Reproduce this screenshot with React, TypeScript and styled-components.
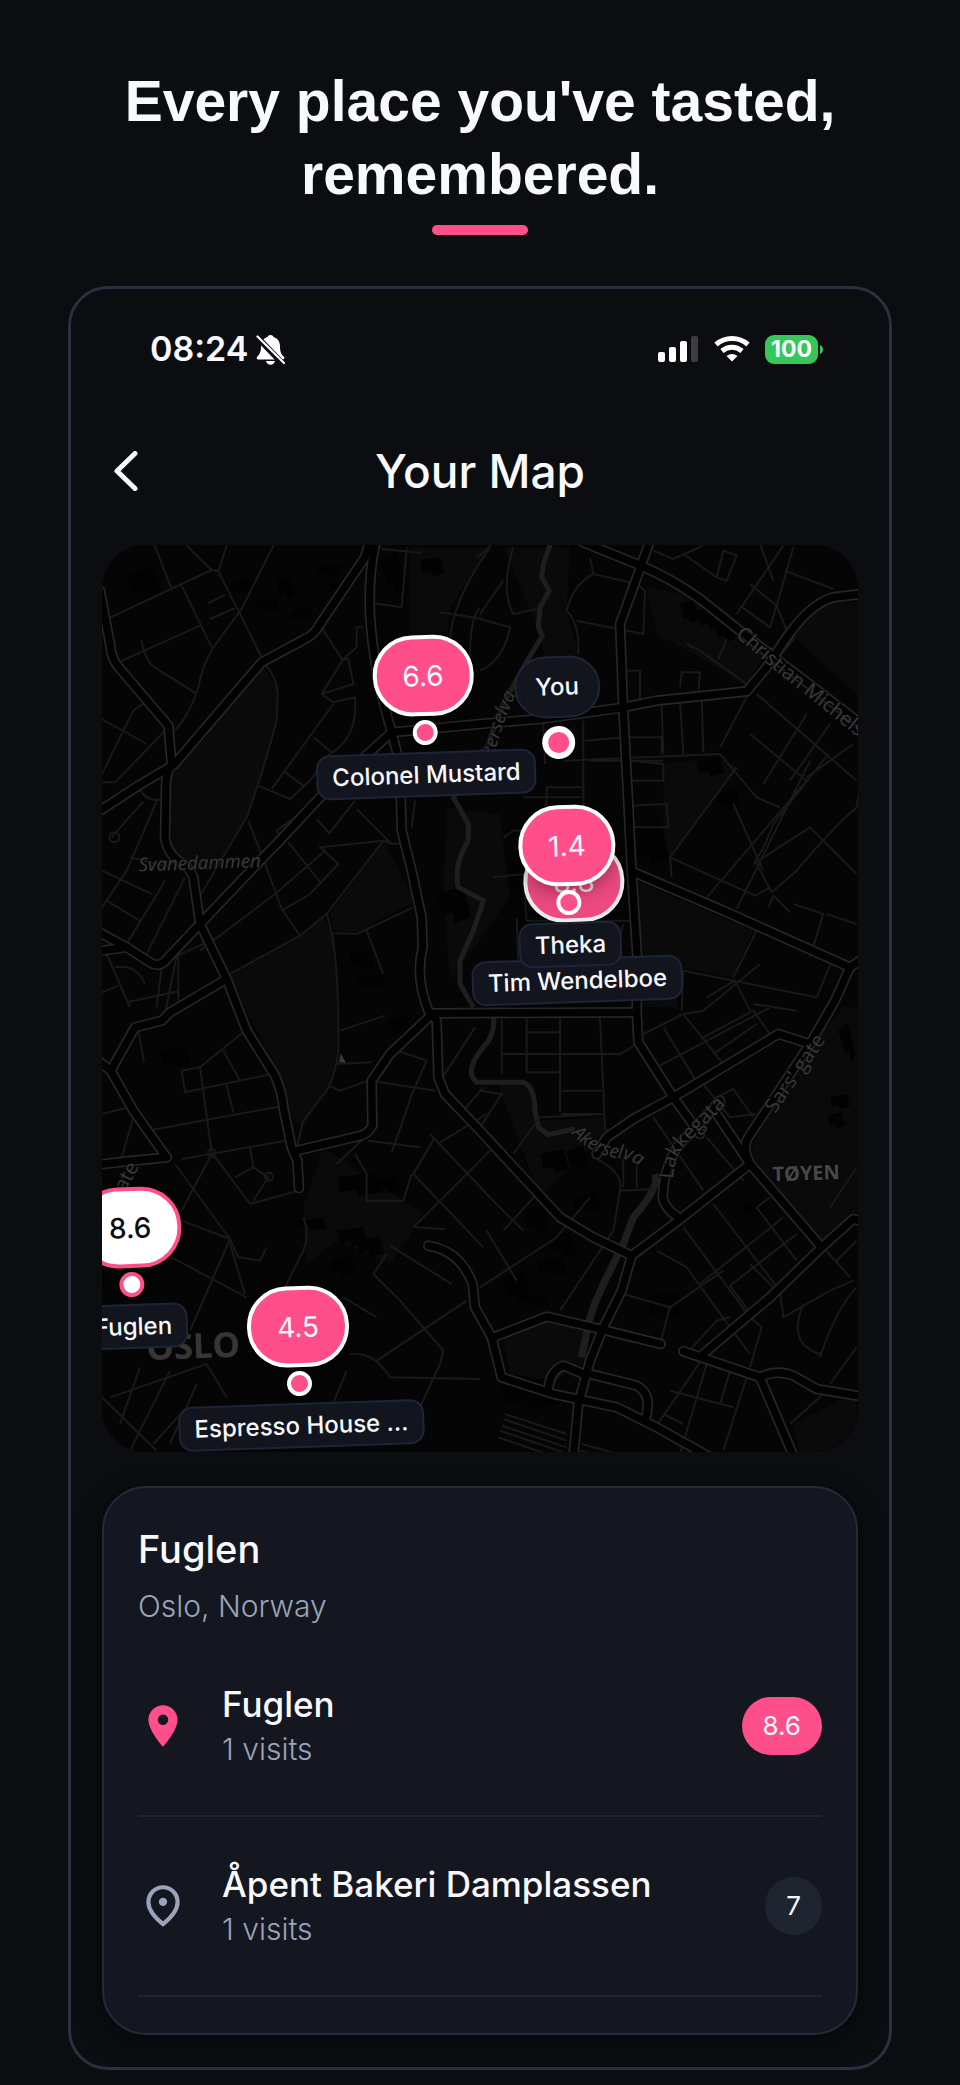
import React from "react";
import styled, { createGlobalStyle, css } from "styled-components";

const color = {
  page: "#0b0d11",
  frame: "#273140",
  card: "#14171f",
  cardLine: "#232b37",
  pink: "#ff4f8b",
  text: "#f8f9ff",
  muted: "#9aa3ba",
};

const GlobalStyle = createGlobalStyle`
  *, *::before, *::after { box-sizing: border-box; }
  body {
    margin: 0;
    background: ${color.page};
    color: ${color.text};
    font-family: Inter, "Liberation Sans", sans-serif;
  }
  h1, h2, h3, p, ul { margin: 0; padding: 0; }
  ul { list-style: none; }
`;

const Page = styled.main`
  display: flex;
  flex-direction: column;
  align-items: center;
  padding: 65px 68px 15px;
`;

const Headline = styled.h1`
  max-width: 760px;
  font: bold 57px/73px "Liberation Sans", Arial, sans-serif;
  text-align: center;
`;

const Accent = styled.div`
  width: 96px;
  height: 10px;
  margin: 14px 0 51px;
  border-radius: 5px;
  background: ${color.pink};
`;

const Phone = styled.section`
  width: 100%;
  padding: 0 31px 32px;
  border: 3px solid ${color.frame};
  border-radius: 40px;
`;

const StatusBar = styled.div`
  display: flex;
  align-items: center;
  justify-content: space-between;
  height: 120px;
  padding: 0 35px 0 48px;
`;

const Clock = styled.div`
  display: flex;
  align-items: center;
  gap: 8px;
  font-size: 34px;
  font-weight: 600;
  line-height: 44px;
`;

const Indicators = styled.div`
  display: flex;
  align-items: center;
  gap: 15px;
`;

const Battery = styled.div`
  display: flex;
  align-items: center;
  gap: 2px;
`;

const BatteryBody = styled.span`
  width: 53px;
  height: 29px;
  border-radius: 9px;
  background: #34c759;
  color: #fff;
  font-size: 23px;
  font-weight: 700;
  line-height: 29px;
  text-align: center;
`;

const TitleBar = styled.header`
  display: grid;
  grid-template-columns: 48px 1fr 48px;
  align-items: center;
  height: 136px;
  padding-bottom: 13px;
`;

const BackButton = styled.button`
  display: flex;
  align-items: center;
  justify-content: center;
  height: 48px;
  padding: 0;
  border: 0;
  background: none;
  color: ${color.text};
`;

const Title = styled.h2`
  font-size: 46px;
  font-weight: 500;
  line-height: 64px;
  text-align: center;
`;

const MapArea = styled.div`
  position: relative;
  width: 100%;
  aspect-ratio: 756 / 907;
  overflow: hidden;
  border-radius: 44px;
  background: #040404;
`;

const MapDrawing = styled.svg`
  display: block;
  width: 100%;
  height: 100%;
`;

const Pin = styled.button<{ $x: number; $y: number; $you?: boolean }>`
  position: absolute;
  left: ${(p) => (p.$x / 756) * 100}%;
  top: ${(p) => (p.$y / 907) * 100}%;
  display: flex;
  flex-direction: column;
  align-items: center;
  padding: 0;
  border: 0;
  background: none;
  color: ${color.text};
  font: 500 24px/28px Inter, "Liberation Sans", sans-serif;
  white-space: nowrap;
  transform-origin: 50% ${(p) => (p.$you ? 87 : 98)}px;
  transform: translate(-50%, ${(p) => (p.$you ? -87 : -98)}px) rotate(-2deg);
`;

const Score = styled.span<{ $selected?: boolean; $behind?: boolean }>`
  display: flex;
  align-items: center;
  justify-content: center;
  min-width: 94px;
  height: 81px;
  margin-bottom: 4px;
  padding: 0 26px;
  border: 4px solid #fff;
  border-radius: 40px;
  background: ${color.pink};
  box-shadow: 0 6px 16px rgba(0, 0, 0, 0.3);
  font-size: 28px;
  font-weight: 400;
  ${(p) => p.$selected && css`
    border-color: ${color.pink};
    background: #fff;
    color: #0b0d11;
    font-weight: 500;
  `}
  ${(p) => p.$behind && css`opacity: 0.92;`}
`;

const Dot = styled.span<{ $selected?: boolean; $large?: boolean }>`
  width: ${(p) => (p.$large ? 33 : 25)}px;
  height: ${(p) => (p.$large ? 33 : 25)}px;
  border: ${(p) => (p.$large ? 6 : 4)}px solid ${(p) => (p.$selected ? color.pink : "#fff")};
  border-radius: 50%;
  background: ${(p) => (p.$selected ? "#fff" : color.pink)};
`;

const Label = styled.span`
  width: max-content;
  max-width: 250px;
  height: 45px;
  margin-top: 7px;
  padding: 0 14px;
  border: 2px solid #1c2538;
  border-radius: 14px;
  background: #12151e;
  line-height: 41px;
`;

const YouBubble = styled.span`
  display: flex;
  align-items: center;
  height: 62px;
  margin-bottom: 8px;
  padding: 0 19px;
  border: 2px solid #1c2538;
  border-radius: 31px;
  background: #12151e;
`;

const Card = styled.section`
  margin-top: 34px;
  padding: 36px 34px;
  border: 2px solid ${color.cardLine};
  border-radius: 44px;
  background: ${color.card};
  box-shadow: 0 8px 24px rgba(0, 0, 0, 0.5);
`;

const CardTitle = styled.h2`
  font-size: 38px;
  font-weight: 500;
  line-height: 50px;
`;

const CardPlace = styled.p`
  margin: 12px 0 11px;
  color: ${color.muted};
  font-size: 30px;
  font-weight: 300;
  line-height: 40px;
`;

const Row = styled.li`
  display: flex;
  align-items: center;
  height: 180px;
  border-bottom: 2px solid #1f2632;
`;

const RowText = styled.div`
  flex: 1;
  margin-left: 34px;
`;

const RowName = styled.h3`
  font-size: 35px;
  font-weight: 500;
  line-height: 46px;
`;

const RowVisits = styled.p`
  color: ${color.muted};
  font-size: 30px;
  font-weight: 300;
  line-height: 44px;
`;

const Badge = styled.span<{ $hot?: boolean }>`
  min-width: 56px;
  height: 58px;
  padding: 0 21px;
  border-radius: 29px;
  background: ${(p) => (p.$hot ? color.pink : "#1e2430")};
  font-size: 26px;
  font-weight: 400;
  line-height: 58px;
  text-align: center;
`;

/* Map geometry, in thirds of a pixel from the map's own origin. */
const MAIN = [
  "M845 0L835 45L825 80L690 280Q672 312 650 322L515 395L252 702L145 765L0 860",
  "M30 180L60 340Q64 380 82 405L235 585L245 700Q228 730 228 760L225 920Q230 960 258 985Q300 1010 310 1040L330 1180L410 1345L470 1500L555 1635Q578 1690 580 1730L605 1850L622 1890L627 1972",
  "M860 20Q835 120 840 250Q850 420 905 605L930 700L935 900L965 1020L995 1160L998 1250Q975 1340 1015 1440L1040 1470L1045 1640L1065 1690L1170 1800L1410 2060L1510 2120L1625 2175",
  "M905 605L1170 580L1350 565L1590 532L1700 510L1970 482L2030 410L2090 320Q2160 220 2230 200L2330 188",
  "M905 605L690 800L560 940L520 980L330 1180L235 1280Q210 1315 180 1295L110 1250L0 1190",
  "M110 1250L0 1265",
  "M410 1345L240 1445L215 1470L135 1490L62 1620L130 1740L230 1880",
  "M0 1570L62 1620M0 1905L110 1892L230 1880",
  "M1480 35L1640 100Q1740 140 1830 205L2000 340L2320 585",
  "M1680 30L1655 100L1590 280L1600 540L1615 820L1625 1020L1643 1300L1640 1440L1645 1535L1750 1700L1830 1810",
  "M1625 1022L1900 1140L2280 1310L2340 1270M2280 1310L2235 1410L2160 1540",
  "M1030 1448L1635 1445M1025 1452L900 1570L845 1650L847 1785Q835 1812 800 1818L620 1860",
  "M1015 2145Q1110 2160 1148 2260L1155 2330L1205 2420L1235 2540L1390 2590L1580 2630L1700 2690L1870 2785",
  "M1750 1700L2065 1510L2160 1540L1975 1820Q1955 1850 1980 1900L2195 2150L2290 2065L2340 2080",
  "M1750 1700L1630 1765L1550 1820L1520 1870",
  "M1890 1710L1760 1850Q1720 1920 1718 2000Q1725 2035 1765 2060",
  "M1880 1750L1940 1840L1980 1900L1765 2070L1625 2175L1595 2280L1540 2390L1500 2490L1465 2620L1450 2780",
  "M2195 2150L2040 2300L1840 2470",
  "M1210 2420L1370 2358L1530 2395L1712 2440",
  "M1500 2530L1640 2565Q1690 2590 1665 2670M1480 2530L1420 2505Q1380 2520 1375 2575",
  "M1780 2462L2010 2540Q2060 2515 2110 2535L2180 2575L2330 2600M2010 2540L2110 2775",
];

const SIDE = [
  "M190 35L243 170M36 272L243 175L365 118L385 122L445 240L525 400Q560 440 563 490L560 570Q520 720 470 860L330 1095M290 45L365 118M410 45L385 122M550 45L455 235L370 350Q335 410 325 470Q300 550 255 600M275 165L365 350M355 218L405 192M360 265L435 232",
  "M85 395L330 285M155 330Q165 400 210 420L318 488M36 565L170 640M165 515L130 540L36 730M235 590L75 755H36M150 775Q170 820 232 803M160 812L65 920M200 812L110 1020L36 1130M120 980L240 1010M36 1020L185 1090M50 1110L150 1170M225 1050L110 1240M285 1040L165 1280",
  "M695 290L757 388L775 385L790 460L695 490L730 515L795 500Q805 620 720 670L660 750L600 805L505 765M757 390L695 490M730 520L545 775M670 620L725 665M585 725L640 765M820 290H800V350L757 388M850 218L935 230L950 50M875 55L995 66M1200 50Q1080 220 1080 340M1170 230Q1140 260 1140 380M1050 245L1180 265",
  "M475 870L520 985L575 1135L630 1215M555 1090L330 1260M555 1090L705 960L690 950L880 930L905 940L940 938M595 935L695 1060M700 800L560 900L570 920M680 865L720 910M690 950L745 1000L660 1090L575 1140M800 835L905 940M795 810L720 905M880 930L710 1150L630 1215L420 1330M710 1150Q745 1250 745 1500V1560Q735 1640 710 1680L640 1770L620 1850M730 1208L800 1210L970 1130M830 1200L880 1330M975 810L965 890",
  "M50 1270L120 1430M36 1385L85 1365M75 1310Q140 1300 165 1360M215 1310L200 1430M265 1270V1410M110 1415L265 1382M345 1238L260 1275L225 1450",
  "M145 1500L162 1595M130 1760L95 1880M36 1750L105 1732M185 1798L565 1728M275 1885L600 1828M460 1505L330 1610L275 1620L285 1685L545 1630M400 1560L450 1650M330 1610L365 1865L480 2020L625 1980M410 1665L430 1745M365 1870L275 2040M480 1850L490 1910L435 1940M490 1910L535 1940L490 2010M255 1900L420 2125L445 2180L510 2190L530 2150M275 2070L420 2125L300 2400M420 2140L465 2290M245 2180L470 2300M640 2060Q660 2110 640 2160L580 2280",
  "M750 1500L885 1455M715 1665L750 1680L835 1650L900 1570M740 1600L845 1595M845 1650L1035 1680M920 1560L1010 1590L970 1680L905 1865M1155 1490L1055 1645M835 1830L990 1850M1035 1820L970 1930L1180 2150M1020 1810L1200 2000M1200 1860L970 2090M1180 1670L1120 1740M1190 1750L1050 1835M795 1870L830 1930V2010H940L965 1930M740 1900L825 1820M975 2090L1065 2095M900 2145L1085 2260M890 2170L850 2230L930 2310L1060 2460L1050 2500L980 2650M1130 2310L860 2490M780 2470Q850 2460 900 2540L1170 2545M700 2690L770 2520",
  "M60 2600L350 2500L410 2600M150 2510L90 2680M240 2520L110 2780M36 2600L200 2760M320 2560L240 2740M290 2630L190 2740M760 2300L860 2360",
  "M1160 80Q1220 40 1200 20M1270 50Q1230 180 1270 250L1340 235M1170 265L1260 290Q1240 390 1170 420M1240 150L1170 250M1500 80L1510 130Q1450 160 1430 240Q1470 280 1465 370M1510 130L1640 160L1665 180L1660 310L1460 270M1600 420H1650V505M1770 470L1775 425H1830L1825 480M1790 340L1830 360L1970 460M1910 325L1885 385",
  "M1500 690H1720M1420 690L1890 670L2000 800L2070 830M1360 580L1365 700M1480 570V840L1475 940M1485 630L1600 620M1620 620H1715V670M1620 690L1720 700V750H1620M1715 520L1720 670M1770 510L1780 670M1835 495L1840 665M1940 710L1740 980L1745 1040M1740 980L1995 1095L2040 1070M1890 650L1975 490L2115 320M2000 490L2300 750M1980 610L2150 750L1850 1100M2150 550L2020 760M2220 580L2100 750M2290 640L2150 740M2215 670L2050 880Q2020 960 1995 990L2045 1085L2120 1020Q2220 900 2300 830L2310 760M1990 1000L2160 890L2300 1030M1940 1135L2160 690M2020 1020L1930 820M1620 825L1730 820L1735 890H1615",
  "M2050 150L2010 40M2080 45L1940 250M2085 120L2230 175M1980 160L2060 225L2110 50M1950 225L2040 290L2060 225L2090 300M1880 140L1900 60L1940 75L1910 150Z M1690 60L1750 85L1840 45M1780 70L1880 140",
  "M1210 1040L1300 1030L1310 1170H1620M1280 1160L1285 1300M1240 920L1270 900L1480 895M1300 800H1480V770H1370V830M1600 1180L1560 1320M1780 1320L1775 1440M1780 1320L2180 1400L2230 1280M1850 1400L1935 1350L1980 1440M1930 1340L2000 1200L1980 1160M2035 1130L2050 1095L2100 1145M2110 1120L2200 1150L2160 1280M2210 1150L2300 1180",
  "M1235 1465V1630M1310 1460V1625H1410M1410 1460V1745M1310 1505H1410M1235 1570H1590L1640 1540M1530 1460L1545 1790L1555 1820M1415 1680H1535M1415 1750H1535L1350 1760L1270 1870M1170 1680L1235 1690L1170 1790M1510 1880Q1600 1920 1590 1980L1570 2100L1410 2340M1590 1980L1690 1975M1600 1880V1970M1640 1890V1970M1240 2100L1340 1990M1170 1970L1300 2100M1190 2100L1280 2250M1170 2270L1400 2120L1500 2000",
  "M1660 1510L1780 1450L1840 1440L2010 1300M1720 1490L1830 1670M1780 1450L1900 1600M1710 1605L2040 1430M1840 1520L1990 1440L2040 1510M1870 1570L2000 1480M1990 1420L2120 1440M1690 1760L1840 1980M1840 1660L1920 1760L2000 1750M1880 1700L1930 1675L1990 1760M1850 1820L1960 1950M1780 2090L1980 2360L2015 2390L1980 2510M1870 2020L2070 2280M1830 2260L2080 2060M1920 2265L2120 2110M2000 2030L2120 2190M2000 2030L2040 2000M1980 2200L2070 2290M1920 2265L1990 2360M1700 2160L1790 2210L1920 2390L1980 2470",
  "M1600 2290L1740 2330L1710 2440M1740 2330L1900 2220M1780 2480L1880 2370L1920 2360M2070 2280L2080 2360L2220 2280L2290 2250M2140 2320Q2090 2440 2190 2470M2300 2270Q2240 2330 2190 2480M2220 2560L2300 2450M2200 2150L2280 2240M2240 2190L2300 2130M1840 2480L1690 2700M1850 2500L1770 2770M1920 2520L1890 2620M1970 2540L1900 2760M1740 2580L1930 2630M1720 2650L1780 2680M2100 2680L2200 2590M2220 2030L2300 1910",
  "M1245 2650L1430 2710M1240 2665L1430 2730M1235 2685L1430 2750M1230 2700L1420 2765M1225 2720L1400 2780M1475 2740L1620 2780M1470 2760L1580 2790",
];

const PARKS = [
  "M520 405L563 480L560 580L470 860L380 1020H300L245 960L235 740L255 700Z",
  "M420 1335L630 1215L700 1160L735 1220L745 1500L730 1640L640 1790L600 1760L560 1620L470 1440Z",
  "M880 930L975 1110L800 1205L730 1200L720 1150Z",
  "M1240 50L1440 50L1430 240L1465 370L1370 420L1350 310Z",
  "M1670 170L1780 190L1980 330L2020 370L1970 470L1850 390L1700 310Z",
  "M1720 700L1890 680L1940 710L1740 980L1720 890Z",
  "M1640 1050L1990 1200L1930 1340L1770 1310L1760 1430L1650 1430Z",
  "M1220 1650L1330 1660L1350 1770L1540 1760L1550 1800L1350 2000Z",
  "M2160 1540L2260 1430H2320V2060L2195 2150L1980 1880L2010 1790Z",
  "M2090 300L2230 215L2310 215V500Z",
  "M700 1850L830 1940L1000 2050L900 2200L740 2130L650 2200L640 2030Z",
  "M1240 2420L1370 2370L1500 2400L1480 2500L1390 2550L1260 2530Z",
  "M960 50L1200 50L1080 230L1060 480L960 500Z",
  "M1070 830L1230 850L1260 1100L1080 1350L1060 1100Z",
  "M2110 2680L2300 2580V2740L2130 2775Z",
];

const WATER = [
  "M1385 30L1360 100L1355 140L1378 180L1350 230L1345 290L1357 315L1300 410L1240 520L1190 650L1140 720L1090 800L1135 880L1135 930Q1090 1000 1105 1070L1180 1110L1150 1200L1110 1290L1110 1360L1150 1430",
  "M1210 1455Q1218 1510 1180 1550Q1120 1620 1160 1655L1300 1655Q1335 1670 1335 1740L1345 1790L1375 1812L1455 1795",
];

const WATER_WIDE = "M1695 1930Q1710 1970 1630 2060L1600 2140L1550 2240Q1510 2320 1495 2380L1475 2480";

const BUILDINGS: number[][] = [
  [420, 150, 70, 40], [500, 210, 60, 34], [560, 150, 40, 60], [600, 240, 60, 26], [680, 110, 70, 24], [720, 160, 60, 24],
  [110, 130, 80, 80], [870, 90, 50, 110], [990, 90, 60, 50], [780, 1270, 60, 50], [800, 1340, 80, 36], [900, 1470, 50, 60],
  [740, 1940, 120, 60], [860, 1950, 60, 40], [740, 2100, 80, 50], [800, 2130, 70, 50], [720, 2190, 60, 50], [620, 2070, 80, 30],
  [1820, 690, 70, 50], [1880, 790, 60, 50], [2010, 880, 40, 30], [1770, 220, 40, 60], [1820, 240, 60, 60], [1870, 270, 50, 70],
  [1350, 1870, 70, 60], [1430, 1860, 50, 60], [1300, 2040, 60, 70], [1380, 2120, 60, 60], [1450, 2000, 70, 50], [1340, 2190, 80, 50],
  [1240, 2240, 60, 80], [1310, 2300, 60, 30], [2245, 1500, 28, 100], [2220, 1700, 50, 36], [2215, 1755, 40, 40], [1040, 1090, 80, 90],
  [210, 1560, 80, 50], [1230, 2560, 160, 80], [1670, 2300, 90, 70], [1960, 2020, 60, 40], [1620, 900, 90, 110], [1340, 950, 90, 120],
];

const MapLabels = () => (
  <g fontFamily='"Open Sans", "Noto Sans", sans-serif' fill="#3a3a3a" stroke="#080808" strokeWidth="5" paintOrder="stroke" fontSize="60">
    <text x="146" y="1022" fontStyle="italic" fontSize="56" transform="rotate(-2 146 1022)">Svanedammen</text>
    <path id="street-michelsen" d="M1935 315L2050 415L2330 640" fill="none" stroke="none" />
    <text><textPath href="#street-michelsen">Christian Michelsens gate</textPath></text>
    <path id="street-sars" d="M2055 1750L2255 1460" fill="none" stroke="none" />
    <text><textPath href="#street-sars">Sars' gate</textPath></text>
    <path id="street-lakke" d="M1750 1945Q1750 1870 1810 1820L1970 1660" fill="none" stroke="none" />
    <text><textPath href="#street-lakke">Lakkegata</textPath></text>
    <path id="river-south" d="M1444 1808Q1500 1870 1580 1882Q1660 1885 1720 1990" fill="none" stroke="none" />
    <text fontStyle="italic" fontSize="56"><textPath href="#river-south">Akerselva</textPath></text>
    <path id="river-north" d="M1205 710Q1240 540 1330 390" fill="none" stroke="none" />
    <text fontStyle="italic" fontSize="56"><textPath href="#river-north">Akerselva</textPath></text>
    <text x="106" y="1985" transform="rotate(-62 106 1985)">ate</text>
    <text x="2048" y="1952" fontWeight="700" fill="#484848" transform="rotate(-2 2048 1952)">TØYEN</text>
    <text x="170" y="2488" fontSize="104" fontWeight="700" fill="#363636" transform="rotate(-2 170 2488)">OSLO</text>
  </g>
);

const CityMap = () => (
  <MapDrawing viewBox="36 43 2268 2721" preserveAspectRatio="xMidYMid slice" role="img" aria-label="Map of Oslo">
    <rect width="2400" height="2800" fill="#050505" />
    <g fill="#0a0a0a">{PARKS.map((d) => <path key={d} d={d} />)}</g>
    <g fill="#020202">
      {BUILDINGS.map(([x, y, w, h]) => (
        <path key={`${x}-${y}`} d={`M${x} ${y}l${w} ${-h / 4}l${h / 4} ${h}l${-w * 0.6} ${h / 5}l-4 ${-h / 3}l${-w * 0.4} 8z`} />
      ))}
    </g>
    <g fill="none" stroke="#1e1e1e" strokeLinejoin="round">
      {WATER.map((d) => <path key={d} d={d} strokeWidth="15" />)}
      <path d={WATER_WIDE} strokeWidth="22" />
    </g>
    <g fill="none" stroke="#191919" strokeWidth="6" strokeLinejoin="round">
      {SIDE.map((d) => <path key={d} d={d} />)}
      <circle cx="73" cy="920" r="15" />
      <circle cx="365" cy="1868" r="12" />
      <circle cx="537" cy="1938" r="12" />
    </g>
    <g fill="none" strokeLinejoin="round" strokeLinecap="round">
      <g stroke="#262626" strokeWidth="32">{MAIN.map((d) => <path key={d} d={d} />)}</g>
      <g stroke="#020202" strokeWidth="22">{MAIN.map((d) => <path key={d} d={d} />)}</g>
    </g>
    <path d="M747 1595L752 1568L768 1596Z" fill="#383838" />
    <MapLabels />
  </MapDrawing>
);

type Place = { name: string; score: string; x: number; y: number; selected?: boolean; behind?: boolean };

const PLACES: Place[] = [
  { name: "Colonel Mustard", score: "6.6", x: 323, y: 188 },
  { name: "Tim Wendelboe", score: "8.8", x: 474, y: 394, behind: true },
  { name: "Theka", score: "1.4", x: 467, y: 358 },
  { name: "Fuglen", score: "8.6", x: 30, y: 740, selected: true },
  { name: "Espresso House …", score: "4.5", x: 198, y: 839 },
];

const BellOff = () => (
  <svg width="29" height="31" viewBox="0 0 29 31" aria-label="Silent">
    <path d="M14.500 1c-1.800 0-3 1-3.300 2.300C7 4.500 5 8 5 12.500c0 6-1.600 8-3.700 10C.2 23.600.5 25.500 2.300 25.500h24.400c1.800 0 2.100-1.900 1-3-2.100-2-3.700-4-3.700-10 0-4.500-2-8-6.200-9.200C17.500 2 16.300 1 14.500 1z" fill="#fff" />
    <path d="M10 27h9c-.5 2.300-2.200 3.700-4.500 3.700S10.500 29.300 10 27z" fill="#fff" />
    <path d="M-1 1L28 31" stroke={color.page} strokeWidth="6" />
    <path d="M1.500 2.500L28 29" stroke="#fff" strokeWidth="2.200" strokeLinecap="round" />
  </svg>
);

const Signal = () => (
  <svg width="41" height="27" viewBox="0 0 41 27" fill="#fff" aria-label="Signal">
    <rect y="16" width="7" height="10" rx="2" />
    <rect x="11" y="11" width="7" height="15" rx="2" />
    <rect x="22" y="5" width="7" height="21" rx="2" />
    <rect x="33" width="7" height="26" rx="2" fill="#3c3d40" />
  </svg>
);

const Wifi = () => (
  <svg width="36" height="26" viewBox="0 0 36 26" fill="none" stroke="#fff" strokeWidth="5" aria-label="Wi-Fi">
    <path d="M2 8.500Q9 2.500 18 2.500T34 8.500" />
    <path d="M8 15Q12.500 11.300 18 11.300T28 15" />
    <path d="M18 25.500L12.500 20Q15 18 18 18T23.500 20Z" fill="#fff" stroke="none" />
  </svg>
);

const PinSolid = () => (
  <svg width="50" height="50" viewBox="0 0 24 24" fill={color.pink} aria-hidden="true">
    <path d="M12 2C8.130 2 5 5.130 5 9c0 5.250 7 13 7 13s7-7.750 7-13c0-3.870-3.130-7-7-7zm0 9.500a2.500 2.500 0 0 1 0-5 2.500 2.500 0 0 1 0 5z" />
  </svg>
);

const PinOutline = () => (
  <svg width="50" height="50" viewBox="0 0 24 24" fill="none" stroke={color.muted} strokeWidth="2" aria-hidden="true">
    <path d="M12 20.700C7.300 16.900 5 13.500 5 10.200 5 6 8.200 3 12 3s7 3 7 7.200c0 3.300-2.300 6.700-7 10.500z" />
    <circle cx="12" cy="10" r="2" fill={color.muted} stroke="none" />
  </svg>
);

export default function App() {
  return (
    <>
      <GlobalStyle />
      <Page>
        <Headline>Every place you've tasted, remembered.</Headline>
        <Accent />
        <Phone>
          <StatusBar>
            <Clock>08:24<BellOff /></Clock>
            <Indicators>
              <Signal />
              <Wifi />
              <Battery>
                <BatteryBody>100</BatteryBody>
                <svg width="3" height="9" viewBox="0 0 3 9" fill="#34c759" aria-hidden="true"><path d="M0 0Q3 1.500 3 4.500T0 9Z" /></svg>
              </Battery>
            </Indicators>
          </StatusBar>
          <TitleBar>
            <BackButton aria-label="Back">
              <svg width="24" height="40" viewBox="0 0 24 40" fill="none" stroke="currentColor" strokeWidth="5" strokeLinecap="round" strokeLinejoin="round">
                <path d="M21 2.500L3 20L21 37.500" />
              </svg>
            </BackButton>
            <Title>Your Map</Title>
          </TitleBar>
          <MapArea>
            <CityMap />
            <Pin $x={457} $y={198} $you>
              <YouBubble>You</YouBubble>
              <Dot $large />
            </Pin>
            {PLACES.map((p) => (
              <Pin key={p.name} $x={p.x} $y={p.y}>
                <Score $selected={p.selected} $behind={p.behind}>{p.score}</Score>
                <Dot $selected={p.selected} />
                <Label>{p.name}</Label>
              </Pin>
            ))}
          </MapArea>
          <Card>
            <CardTitle>Fuglen</CardTitle>
            <CardPlace>Oslo, Norway</CardPlace>
            <ul>
              <Row>
                <PinSolid />
                <RowText>
                  <RowName>Fuglen</RowName>
                  <RowVisits>1 visits</RowVisits>
                </RowText>
                <Badge $hot>8.6</Badge>
              </Row>
              <Row>
                <PinOutline />
                <RowText>
                  <RowName>Åpent Bakeri Damplassen</RowName>
                  <RowVisits>1 visits</RowVisits>
                </RowText>
                <Badge>7</Badge>
              </Row>
            </ul>
          </Card>
        </Phone>
      </Page>
    </>
  );
}
